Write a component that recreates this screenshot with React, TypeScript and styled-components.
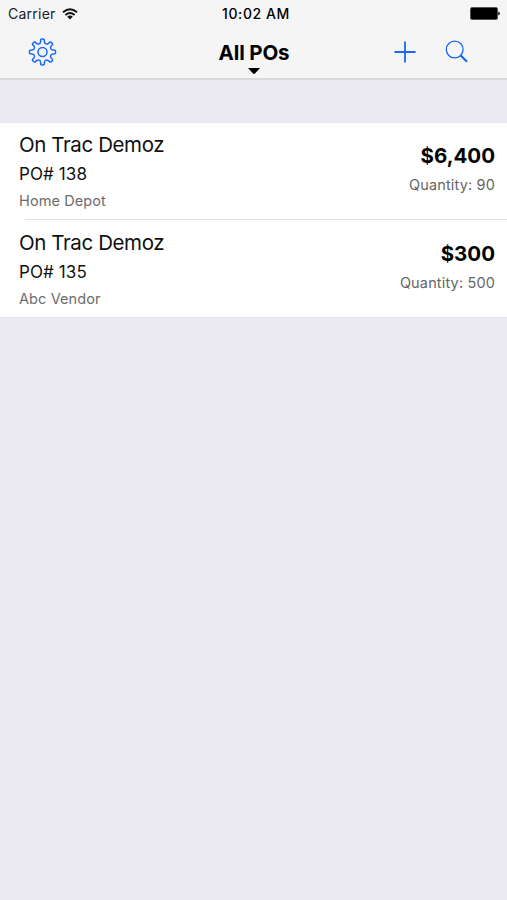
import React from "react";
import styled, { createGlobalStyle } from "styled-components";

const GlobalStyle = createGlobalStyle`
  * { box-sizing: border-box; }
  body {
    margin: 0;
    background: #eaeaf0;
    font-family: Inter, "Liberation Sans", sans-serif;
    color: #000;
  }
`;

const Screen = styled.main`
  min-height: 900px;
  background: #eaeaf0;
`;

const Header = styled.header`
  height: 80px;
  background: #f5f5f6;
  border-bottom: 2px solid #dadade;
`;

const StatusBar = styled.div`
  display: grid;
  grid-template-columns: 1fr auto 1fr;
  align-items: center;
  height: 27px;
  padding: 0 7px 0 8px;
`;

const Carrier = styled.span`
  display: flex;
  align-items: center;
  gap: 6px;
  font-size: 14px;
  line-height: 20px;
  letter-spacing: 0.25px;
  color: #222;
`;

const Clock = styled.span`
  margin-left: 4px;
  font-size: 14px;
  line-height: 20px;
  font-weight: 500;
  letter-spacing: 0.6px;
  color: #000;
`;

const BatteryIcon = styled.svg`
  justify-self: end;
  display: block;
`;

const NavBar = styled.nav`
  display: grid;
  grid-template-columns: 1fr auto 1fr;
  height: 51px;
  padding: 0 27px 0 28px;
`;

const IconButton = styled.button`
  display: block;
  padding: 0;
  border: 0;
  background: none;
  color: #1769f2;
  svg { display: block; }
`;

const NavActions = styled.div`
  display: flex;
  justify-content: flex-end;
  align-items: flex-start;
  gap: 29px;
  padding: 11px 11px 0 0;
`;

const NavLeading = styled.div`
  padding-top: 11px;
`;

const TitleButton = styled.button`
  display: flex;
  flex-direction: column;
  align-items: center;
  padding: 12px 0 0;
  border: 0;
  background: none;
  font: inherit;
  color: #000;
`;

const Title = styled.span`
  font-size: 20.5px;
  line-height: 28px;
  font-weight: 700;
  letter-spacing: -0.15px;
`;

const Caret = styled.svg`
  display: block;
  margin-top: 1px;
`;

const List = styled.ul`
  list-style: none;
  margin: 42px 0 0;
  padding: 0;
  background: #fff;
  border-top: 1px solid #e9e9ed;
  border-bottom: 1px solid #e1e1e4;
`;

const Row = styled.li`
  display: flex;
  justify-content: space-between;
  height: 96px;
  padding: 0 12px 0 19px;
`;

const Separator = styled.li`
  height: 1px;
  margin: 0 0 1px 25px;
  background: #e5e5e7;
`;

const Info = styled.div`
  padding-top: 7px;
`;

const Project = styled.div`
  font-size: 20.5px;
  line-height: 30px;
  letter-spacing: -0.4px;
  color: #111;
`;

const OrderNumber = styled.div`
  font-size: 17px;
  line-height: 29px;
  letter-spacing: 0.1px;
  color: #111;
`;

const Vendor = styled.div`
  font-size: 14.5px;
  line-height: 23px;
  letter-spacing: 0.1px;
  color: #6c6c6c;
`;

const Totals = styled.div`
  padding-top: 18px;
  text-align: right;
`;

const Amount = styled.div`
  font-size: 20.5px;
  line-height: 30px;
  font-weight: 700;
`;

const Quantity = styled.div`
  font-size: 14.5px;
  line-height: 28px;
  letter-spacing: 0.15px;
  color: #666;
`;

const orders = [
  { project: "On Trac Demoz", number: "PO# 138", vendor: "Home Depot", amount: "$6,400", quantity: 90 },
  { project: "On Trac Demoz", number: "PO# 135", vendor: "Abc Vendor", amount: "$300", quantity: 500 },
];

function gearOutline(): string {
  const point = (radius: number, degrees: number) => {
    const a = (degrees * Math.PI) / 180;
    return `${(14.5 + radius * Math.sin(a)).toFixed(2)} ${(14 - radius * Math.cos(a)).toFixed(2)}`;
  };
  let d = "";
  for (let i = 0; i < 8; i++) {
    const c = i * 45;
    d += `${i ? "L" : "M"}${point(12.6, c - 8)}Q${point(13.2, c - 6)} ${point(13.1, c)}`;
    d += `Q${point(13.2, c + 6)} ${point(12.6, c + 8)}L${point(10.5, c + 10.5)}`;
    d += `Q${point(8.6, c + 14)} ${point(9, c + 22.5)}Q${point(8.6, c + 31)} ${point(10.5, c + 34.5)}`;
  }
  return d + "Z";
}

function Gear() {
  return (
    <svg width="29" height="28" fill="none" stroke="currentColor" strokeWidth="1.5" strokeLinejoin="round">
      <path d={gearOutline()} />
      <circle cx="14.5" cy="14" r="4.5" />
    </svg>
  );
}

export default function App() {
  return (
    <Screen>
      <GlobalStyle />
      <Header>
        <StatusBar>
          <Carrier>
            Carrier
            <svg width="16" height="12" viewBox="0 0 16 12" fill="none" stroke="#151515" strokeWidth="1.9">
              <path d="M1 4.3Q8-1.6 15 4.3M3.4 7Q8 3 12.6 7" />
              <path d="M5.2 8.7Q8 6.5 10.8 8.7L8 11.5Z" fill="#151515" stroke="none" />
            </svg>
          </Carrier>
          <Clock>10:02 AM</Clock>
          <BatteryIcon width="30" height="13">
            <rect x="0.5" y="0.5" width="27" height="12" rx="1.5" fill="#000" stroke="#555" />
            <path d="M28.2 4.5Q30 5 30 6.5T28.2 8.5Z" fill="#222" />
          </BatteryIcon>
        </StatusBar>
        <NavBar>
          <NavLeading>
            <IconButton aria-label="Settings"><Gear /></IconButton>
          </NavLeading>
          <TitleButton>
            <Title>All POs</Title>
            <Caret width="12" height="6"><path d="M0 0H12L7 5.5Q6 6.3 5 5.5Z" /></Caret>
          </TitleButton>
          <NavActions>
            <IconButton aria-label="Add order">
              <svg width="22" height="28" fill="none" stroke="currentColor" strokeWidth="1.8">
                <path d="M.5 14H21.5M11 3.5V24.5" />
              </svg>
            </IconButton>
            <IconButton aria-label="Search">
              <svg width="24" height="28" fill="none" stroke="currentColor">
                <circle cx="9.7" cy="11.5" r="8.4" strokeWidth="1.3" />
                <path d="M15.5 17.3L22 23.7" strokeWidth="2.3" />
              </svg>
            </IconButton>
          </NavActions>
        </NavBar>
      </Header>
      <List>
        {orders.map((order, index) => (
          <React.Fragment key={order.number}>
            {index > 0 && <Separator role="separator" />}
            <Row>
              <Info>
                <Project>{order.project}</Project>
                <OrderNumber>{order.number}</OrderNumber>
                <Vendor>{order.vendor}</Vendor>
              </Info>
              <Totals>
                <Amount>{order.amount}</Amount>
                <Quantity>Quantity: {order.quantity}</Quantity>
              </Totals>
            </Row>
          </React.Fragment>
        ))}
      </List>
    </Screen>
  );
}
